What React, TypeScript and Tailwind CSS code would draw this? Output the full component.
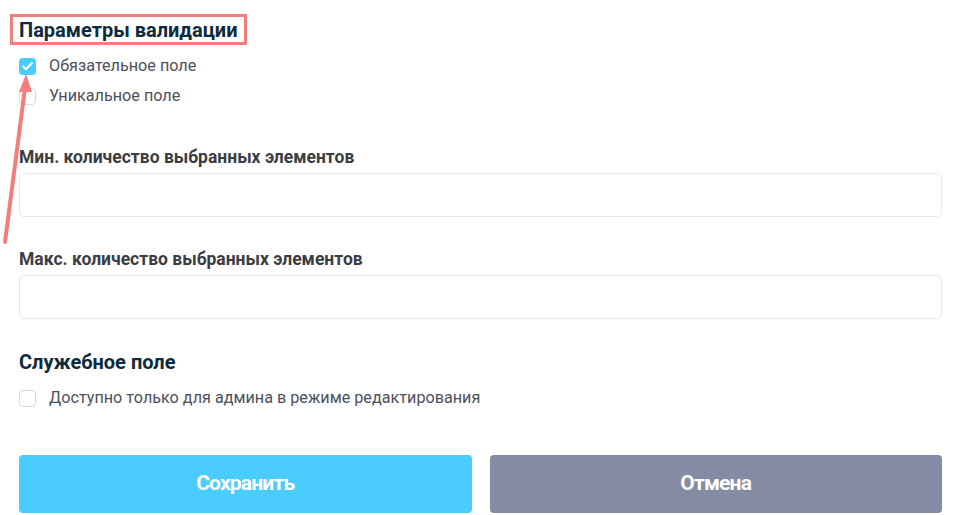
import { Check } from 'lucide-react';

function Box({ checked }: { checked?: boolean }) {
  return checked ? (
    <span className="w-[17px] h-[17px] rounded-[4px] bg-[#4accfd] flex items-center justify-center">
      <Check size={13} strokeWidth={4} color="#fff" />
    </span>
  ) : (
    <span className="w-[17px] h-[17px] rounded-[4px] border border-[#d5d8de] bg-white" />
  );
}

function Option({ label, checked }: { label: string; checked?: boolean }) {
  return (
    <label className="flex items-center gap-[13px] h-[30px]">
      <Box checked={checked} />
      <span className="text-[16.2px] text-[#4b505c]">{label}</span>
    </label>
  );
}

export default function App() {
  return (
    <main className="relative w-[957px] h-[515px] bg-white pl-[19px] pr-[15px] pt-[17px] font-['Roboto','Liberation_Sans',sans-serif] overflow-hidden">
      <div className="relative inline-block">
        <h2 className="text-[20px] font-bold text-[#0d2b3c] leading-[26px]">Параметры валидации</h2>
        <div className="absolute -left-[9px] -top-[3px] w-[237px] h-[31px] border-[3px] border-[#ee7f7c]" />
      </div>

      <div className="mt-[7px] flex flex-col">
        <Option label="Обязательное поле" checked />
        <Option label="Уникальное поле" />
      </div>

      <div className="mt-[35px]">
        <div className="text-[17.5px] font-bold text-[#3b3d42] leading-[22px]">Мин. количество выбранных элементов</div>
        <div className="mt-[5px] h-[44px] rounded-[5px] border border-[#e6e8eb]" />
      </div>

      <div className="mt-[31px]">
        <div className="text-[17.5px] font-bold text-[#3b3d42] leading-[22px]">Макс. количество выбранных элементов</div>
        <div className="mt-[5px] h-[44px] rounded-[5px] border border-[#e6e8eb]" />
      </div>

      <h2 className="mt-[30px] text-[20px] font-bold text-[#0d2b3c] leading-[26px]">Служебное поле</h2>
      <div className="mt-[8px]">
        <Option label="Доступно только для админа в режиме редактирования" />
      </div>

      <div className="mt-[42px] flex gap-[18px]">
        <button className="flex-1 h-[58px] rounded-[4px] bg-[#4accfd] text-white text-[21px] font-bold tracking-[-0.8px]">
          Сохранить
        </button>
        <button className="flex-1 h-[58px] rounded-[4px] bg-[#838ca3] text-white text-[21px] font-bold tracking-[-0.8px]">
          Отмена
        </button>
      </div>

      <svg className="absolute left-0 top-0 pointer-events-none" width="60" height="260">
        <line x1="5" y1="242" x2="25" y2="88" stroke="#f47c7c" strokeWidth="4" strokeLinecap="round" />
        <polygon points="26,74 19,92 32,92" fill="#f47c7c" />
      </svg>
    </main>
  );
}
